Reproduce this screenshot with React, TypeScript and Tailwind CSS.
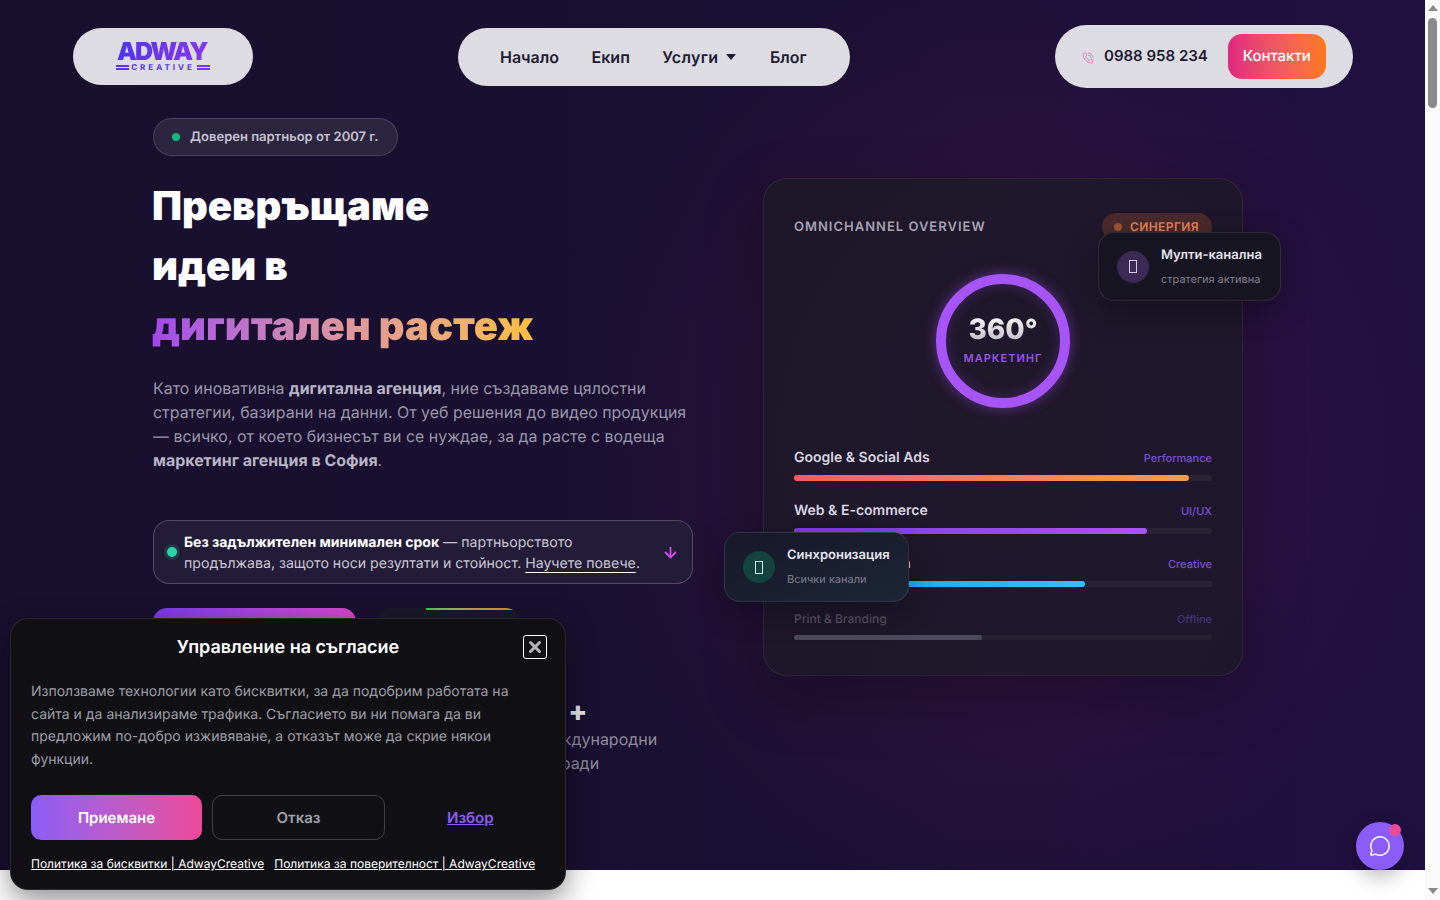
import { ArrowDown, MessageCircle, PhoneCall, X } from "lucide-react";

const bars = [
  { label: "Google & Social Ads", tag: "Performance", width: 94.5, fill: "bg-gradient-to-r from-[#ff5a5f] to-[#ff9a4d]" },
  { label: "Web & E-commerce", tag: "UI/UX", width: 84.5, fill: "bg-gradient-to-r from-[#7c3aed] to-[#a855f7]" },
  { label: "Video Production", tag: "Creative", width: 69.7, fill: "bg-gradient-to-r from-[#0ea5e9] to-[#38bdf8]" },
];

function Tofu({ color }: { color: string }) {
  return <span className={`block h-[13px] w-[8px] border ${color}`} />;
}

function Header() {
  return (
    <header className="flex items-center justify-between pl-[73px] pr-[72px] pt-[25px]">
      <div className="flex h-[57px] w-[180px] flex-col items-center justify-center rounded-full bg-[#dcdce2]">
        <span className="bg-gradient-to-r from-[#4f35e8] to-[#8a35f0] bg-clip-text pr-[2px] text-[25px] font-black leading-[20px] tracking-[-1.8px] text-transparent">
          ADWAY
        </span>
        <span className="mt-[1px] flex items-center gap-[2px] text-[8px] font-bold leading-[8px] tracking-[3px] text-[#5b35ea]">
          <span className="flex w-[13px] flex-col gap-[1px]">
            <i className="block h-[2px] bg-[#5b35ea]" />
            <i className="block h-[2px] bg-[#5b35ea]" />
          </span>
          CREATIVE
          <span className="flex w-[13px] flex-col gap-[1px]">
            <i className="block h-[2px] bg-[#7b35ee]" />
            <i className="block h-[2px] bg-[#7b35ee]" />
          </span>
        </span>
      </div>

      <nav className="flex h-[58px] w-[392px] items-center gap-[32.5px] rounded-full bg-[#dcdce2] pl-[42px] text-[16px] font-semibold text-[#1e1b33]">
        <span>Начало</span>
        <span>Екип</span>
        <span className="flex items-center gap-[8px] tracking-[0.3px]">
          Услуги
          <svg width="10" height="6" viewBox="0 0 10 6" fill="#1e1b33">
            <path d="M0 0h10L5 6z" />
          </svg>
        </span>
        <span className="ml-[1px]">Блог</span>
      </nav>

      <div className="flex h-[63px] w-[298px] items-center rounded-full bg-[#dcdce2] pl-[27px]">
        <PhoneCall size={12} strokeWidth={1} className="mt-[3px] text-[#e0368c]" />
        <span className="ml-[10px] text-[15px] font-semibold text-[#1e1b33]">0988 958 234</span>
        <span className="ml-[20px] flex h-[45px] w-[98px] items-center justify-center rounded-[14px] bg-gradient-to-r from-[#e0277f] to-[#ff7a14] text-[15px] font-medium text-white">
          Контакти
        </span>
      </div>
    </header>
  );
}

function LeftColumn() {
  return (
    <div className="w-[540px]">
      <div className="flex h-[38px] w-[245px] items-center gap-[10px] rounded-full border border-white/15 bg-[#2c2540] pl-[18px] text-[13px] font-semibold text-[#c6c3d0]">
        <span className="h-[8px] w-[8px] rounded-full bg-[#10b981]" />
        <span className="pt-[1px]">Доверен партньор от 2007 г.</span>
      </div>

      <h1 className="-ml-[1px] mt-[20px] text-[40px] font-black leading-[60px] text-white">
        Превръщаме
        <br />
        идеи в
        <br />
        <span className="bg-gradient-to-r from-[#a345ee] via-[#e0959c] to-[#fbbf3c] bg-clip-text text-transparent">
          дигитален растеж
        </span>
      </h1>

      <p className="mt-[21px] text-[15.93px] leading-[24px] text-[#9a97a8]">
        Като иновативна <b className="font-bold text-[#b8b5c4]">дигитална агенция</b>, ние създаваме цялостни
        стратегии, базирани на данни. От уеб решения до видео продукция — всичко, от което бизнесът ви се нуждае, за да
        расте с водеща <b className="font-bold text-[#b8b5c4]">маркетинг агенция в София</b>.
      </p>

      <div className="mt-[47px] flex h-[64px] items-center rounded-[16px] border border-white/20 bg-[#231c38] pl-[13px] pr-[13px]">
        <span className="h-[10px] w-[10px] shrink-0 rounded-full bg-[#2dd4a7] shadow-[0_0_0_3px_rgba(45,212,167,0.15)]" />
        <p className="ml-[7px] flex-1 pt-[1px] text-[14.15px] leading-[21px] text-[#c9c6d3]">
          <b className="text-[14px] font-bold text-white">Без задължителен минимален срок</b> — партньорството
          продължава, защото носи резултати и стойност. <span className="border-b border-white">Научете повече</span>.
        </p>
        <ArrowDown size={17} strokeWidth={2.5} className="text-[#d946ef]" />
      </div>

      <div className="mt-[24px] flex gap-[20px]">
        <div className="h-[54px] w-[203px] rounded-[14px] bg-gradient-to-r from-[#7c3aed] to-[#d946cf]" />
        <div className="relative h-[54px] w-[144px] overflow-hidden rounded-[14px] bg-[#1d1a29]">
          <span className="absolute left-[50px] right-0 top-0 h-[2px] bg-gradient-to-r from-[#16d34a] to-[#f97316]" />
        </div>
      </div>

      <div className="ml-[382px] mt-[33px]">
        <div className="flex h-[32px] items-center pl-[3px] text-[24px] font-extrabold text-[#e4e2ea]">
          <span>15</span>
          <span className="ml-[4px] text-[28px] leading-[28px]">+</span>
        </div>
        <div className="text-[16px] leading-[24px] text-[#8f8c9d]">
          Международни
          <br />
          награди
        </div>
      </div>
    </div>
  );
}

function Overview() {
  return (
    <div className="relative ml-[70px] mt-[60px] h-[498px] w-[480px] rounded-[24px] border border-white/[0.07] bg-[#1e1829]/90 px-[30px] pt-[34px] shadow-[0_20px_60px_rgba(0,0,0,0.25)]">
      <div className="flex items-center justify-between">
        <span className="pt-[2px] text-[13px] font-semibold tracking-[1px] text-[#a7a3b3]">OMNICHANNEL OVERVIEW</span>
        <span className="flex h-[28px] w-[110px] items-center gap-[8px] rounded-full bg-[#4a2a2c] pl-[12px] text-[12px] font-semibold tracking-[0.4px] text-[#e58350]">
          <i className="h-[8px] w-[8px] rounded-full bg-[#9c5236]" />
          СИНЕРГИЯ
        </span>
      </div>

      <div className="mx-auto mt-[33px] flex h-[134px] w-[134px] flex-col items-center justify-center rounded-full border-[10px] border-[#a855f7] pb-[4px] shadow-[0_0_14px_rgba(168,85,247,0.45),inset_0_0_14px_rgba(168,85,247,0.25)]">
        <span className="bg-gradient-to-b from-white to-[#b9b7c0] bg-clip-text text-[28px] font-extrabold leading-[34px] text-transparent">
          360°
        </span>
        <span className="mt-[4px] text-[11px] font-semibold tracking-[1px] text-[#9a55e8]">МАРКЕТИНГ</span>
      </div>

      <div className="mt-[39px] flex flex-col gap-[19px]">
        {bars.map((bar) => (
          <div key={bar.label}>
            <div className="flex h-[20px] items-center justify-between">
              <span className="text-[14px] font-semibold text-[#d9d6e2]">{bar.label}</span>
              <span className="pt-[2px] text-[11px] font-medium text-[#7a50d8]">{bar.tag}</span>
            </div>
            <div className="mt-[8px] h-[6px] rounded-full bg-white/5">
              <div className={`h-full rounded-full ${bar.fill}`} style={{ width: `${bar.width}%` }} />
            </div>
          </div>
        ))}
        <div className="mt-[3px]">
          <div className="flex h-[20px] items-center justify-between">
            <span className="text-[12px] font-medium text-[#55515f]">Print & Branding</span>
            <span className="text-[11px] font-medium text-[#46357f]">Offline</span>
          </div>
          <div className="mt-[6px] h-[5px] rounded-full bg-white/[0.03]">
            <div className="h-full w-[45%] rounded-full bg-[#4b4a5c]" />
          </div>
        </div>
      </div>

      <div className="absolute left-[334px] top-[53px] flex h-[69px] w-[183px] items-center gap-[12px] rounded-[16px] border border-white/10 bg-[#181522] pl-[18px] shadow-[0_10px_30px_rgba(0,0,0,0.3)]">
        <span className="flex h-[32px] w-[32px] items-center justify-center rounded-full bg-[#3a2a55]">
          <Tofu color="border-[#d8c8f0]" />
        </span>
        <div className="pb-[2px]">
          <div className="text-[13px] font-semibold leading-[20px] text-[#e6e4ec]">Мулти-канална</div>
          <div className="mt-[6px] text-[11px] leading-[16px] text-[#807d8c]">стратегия активна</div>
        </div>
      </div>

      <div className="absolute left-[-40px] top-[353px] flex h-[70px] w-[185px] items-center gap-[12px] rounded-[16px] border border-white/10 bg-gradient-to-br from-[#17172a] to-[#1c2636] pl-[18px] shadow-[0_10px_30px_rgba(0,0,0,0.3)]">
        <span className="flex h-[32px] w-[32px] items-center justify-center rounded-full bg-[#15433f]">
          <Tofu color="border-[#c8f0e4]" />
        </span>
        <div className="pb-[2px]">
          <div className="text-[13px] font-semibold leading-[20px] text-[#e6e4ec]">Синхронизация</div>
          <div className="mt-[6px] text-[11px] leading-[16px] text-[#807d8c]">Всички канали</div>
        </div>
      </div>
    </div>
  );
}

function CookieModal() {
  return (
    <div className="absolute bottom-[10px] left-[10px] h-[272px] w-[556px] rounded-[18px] border border-white/10 bg-[#111115] px-[20px] shadow-[0_10px_30px_rgba(0,0,0,0.45)]">
      <div className="relative flex h-[56px] items-center justify-center">
        <span className="text-[18px] font-semibold text-white">Управление на съгласие</span>
        <span className="absolute right-[-2px] top-[16px] flex h-[24px] w-[24px] items-center justify-center rounded-[3px] border border-white">
          <X size={18} strokeWidth={4} className="text-[#b5b5bb]" />
        </span>
      </div>
      <p className="mt-[6px] text-[14px] leading-[22.6px] text-[#9d9da5]">
        Използваме технологии като бисквитки, за да подобрим работата на сайта и да анализираме трафика. Съгласието ви
        ни помага да ви предложим по-добро изживяване, а отказът може да скрие някои функции.
      </p>
      <div className="mt-[24px] flex items-center gap-[10px] text-[15px] font-semibold">
        <span className="flex h-[45px] w-[171px] items-center justify-center rounded-[10px] bg-gradient-to-r from-[#8b5cf6] to-[#ec4899] text-white">
          Приемане
        </span>
        <span className="flex h-[45px] w-[173px] items-center justify-center rounded-[10px] border border-white/20 text-[#a0a0a8]">
          Отказ
        </span>
        <span className="ml-[52px] text-[#8b5cf6] underline">Избор</span>
      </div>
      <div className="mt-[15px] flex gap-[10px] whitespace-nowrap text-[12px] leading-[18px] text-white underline">
        <span>Политика за бисквитки | AdwayCreative</span>
        <span>Политика за поверителност | AdwayCreative</span>
      </div>
    </div>
  );
}

export default function App() {
  return (
    <div className="relative flex h-screen overflow-hidden bg-white font-['Inter',sans-serif] [text-rendering:geometricPrecision]">
      <main className="flex-1">
        <section className="h-[870px] bg-[#1a1033] bg-[radial-gradient(ellipse_420px_480px_at_1003px_440px,rgba(120,30,90,0.3),transparent),linear-gradient(90deg,#19102f_0%,#1a1033_60%,#201040_100%)]">
          <Header />
          <div className="mt-[30px] flex pl-[153px]">
            <LeftColumn />
            <Overview />
          </div>
        </section>
      </main>

      <aside className="relative flex w-[15px] flex-col items-center bg-[#fafafa]">
        <span className="mt-[5px] h-0 w-0 border-x-[5px] border-b-[6px] border-x-transparent border-b-[#8a8a8a]" />
        <span className="mt-[7px] h-[90px] w-[9px] rounded-full bg-[#8a8a8a]" />
        <span className="mb-[6px] mt-auto h-0 w-0 border-x-[5px] border-t-[6px] border-x-transparent border-t-[#8a8a8a]" />
      </aside>

      <CookieModal />

      <div className="absolute left-[1356px] top-[822px] flex h-[48px] w-[48px] items-center justify-center rounded-full bg-[#8b5cf6] shadow-[0_8px_20px_rgba(0,0,0,0.25)]">
        <MessageCircle size={22} strokeWidth={1.6} className="text-white" />
        <span className="absolute right-[3px] top-[2px] h-[12px] w-[12px] rounded-full bg-[#ec4899]" />
      </div>
    </div>
  );
}
